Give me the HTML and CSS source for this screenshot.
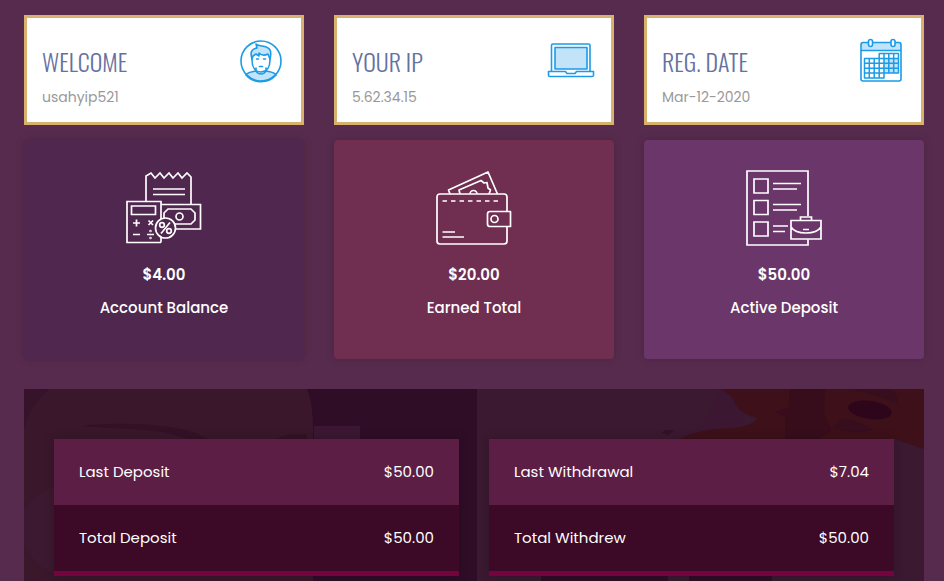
FILE: index.html
```html
<!DOCTYPE html>
<html lang="en">
<head>
<meta charset="utf-8">
<meta name="viewport" content="width=device-width, initial-scale=1">
<title>Account dashboard</title>
<link rel="stylesheet" href="styles.css">
</head>
<body>
<main class="dashboard">
  <section class="cards">
    <article class="info">
      <div>
        <h2 class="info-title">WELCOME</h2>
        <p class="info-text">usahyip521</p>
      </div>
      <svg class="info-icon" viewBox="0 0 48 48" aria-hidden="true">
        <g fill="none" stroke="#1b9be8" stroke-width="1.6" stroke-linejoin="round" stroke-linecap="round">
          <path fill="#c2e3f8" d="M9 38C11 35 15 35 19 34C21 38 27 38 29 34C33 35 37 35 39 38A20 20 0 0 1 9 38Z"/>
          <circle cx="24" cy="24" r="20"/>
          <path d="M15 19V23C15 30 18 35 24 35S33 30 33 23V19M19 31V34M29 31V34"/>
          <path fill="#c2e3f8" d="M15 22C13 16 14 12 20 11L19 7C22 10 28 8 31 11C35 13 34 18 33 22L31 17C27 19 24 18 22 16L22 19L19 17L16 19Z"/>
          <path d="M19.500 22H21.500M26.500 22H28.500M22.500 29.500H25.500"/>
        </g>
      </svg>
    </article>
    <article class="info">
      <div>
        <h2 class="info-title">YOUR IP</h2>
        <p class="info-text">5.62.34.15</p>
      </div>
      <svg class="info-icon" viewBox="0 0 48 48" aria-hidden="true">
        <g fill="none" stroke="#1b9be8" stroke-width="1.6" stroke-linejoin="round">
          <path d="M4.500 34V8.500Q4.500 7 6 7H41.500Q43 7 43 8.500V34"/>
          <path fill="#c2e3f8" d="M8 10.500H40V32H8Z"/>
          <path d="M1.500 34.500H18.500L20 36.500H28L29.500 34.500H46.500V38.500Q46.500 39.500 45 39.500H3Q1.500 39.500 1.500 38.500Z"/>
        </g>
      </svg>
    </article>
    <article class="info">
      <div>
        <h2 class="info-title">REG. DATE</h2>
        <p class="info-text">Mar-12-2020</p>
      </div>
      <svg class="info-icon" viewBox="0 0 48 48" aria-hidden="true">
        <g fill="none" stroke="#1b9be8" stroke-width="1.600" stroke-linejoin="round">
          <path fill="#c2e3f8" d="M4 13.500V8Q4 5.500 6 5.500H42Q44 5.500 44 8V13.500Z"/>
          <path d="M4 13.500V42Q4 44 6 44H42Q44 44 44 42V13.500"/>
          <path fill="#c2e3f8" stroke="none" d="M26 21H41V36H26Z"/>
          <path stroke-width="1.500" d="M7.500 21.500H22.200V16.500H41.500V36H27V41H7.500ZM7.500 26.300H41.500M7.500 31.200H41.500M7.500 36H27M22.200 21.500H41.500M12.300 21.500V41M17.200 21.500V41M22.200 21.500V41M27 16.500V36M31.800 16.500V36M36.700 16.500V36"/>
          <rect x="11.500" y="2.500" width="4" height="7" rx="2" fill="#fff"/>
          <rect x="34" y="2.500" width="4" height="7" rx="2" fill="#fff"/>
        </g>
      </svg>
    </article>

    <article class="stat stat-balance">
      <svg class="stat-icon" viewBox="0 0 76 76" aria-hidden="true">
        <g fill="none" stroke="#fff" stroke-width="1.700">
          <path d="M20 31V6L25 3L29 8L34 3L38 8L43 3L47 8L52 3L56 8L61 3L65 7V34M27 19H59M27 24.500H59"/>
          <path d="M35 34.500H74.500V59H49"/>
          <path d="M38 49V43L42 39H65L69 43V50L65 54H49"/>
          <circle cx="53.500" cy="46.500" r="3.500"/>
          <path d="M35 72.500H1V31.500H35V72.500M5.500 36H29.500V44.500H5.500Z"/>
          <path d="M7 53H14M10.500 49.500V56.500M22.500 50.500L27 55M27 50.500L22.500 55M7 64.500H14M21 64.500H28"/>
          <circle cx="24.500" cy="61" r=".4"/><circle cx="24.500" cy="68" r=".4"/>
          <circle cx="39.500" cy="58" r="10" fill="#50274f"/>
          <path d="M44 52.500L35 63.500"/>
          <circle cx="36" cy="55" r="2.300"/><circle cx="43" cy="61" r="2.300"/>
        </g>
      </svg>
      <p class="stat-value">$4.00</p>
      <p class="stat-label">Account Balance</p>
    </article>
    <article class="stat stat-earned">
      <svg class="stat-icon" viewBox="0 0 76 76" aria-hidden="true">
        <g fill="none" stroke="#fff" stroke-width="1.700" stroke-linejoin="round">
          <path d="M71 41V27Q71 24 68 24H4Q1 24 1 27V71Q1 74 4 74H68Q71 74 71 71V56"/>
          <path d="M14 24L12.500 20L52 2L61.500 24M24 24L23 20L45 10.500L48 13L51 12.500L52 18L54.500 20L53 24"/>
          <path d="M34 24A3.500 3.500 0 0 1 41 24"/>
          <path stroke-dasharray="4.500 4" d="M6.500 31H65"/>
          <path d="M6.500 62H19M6.500 67H28M74.500 41.500H54Q51.500 41.500 51.500 44V54Q51.500 56.500 54 56.500H74.500Z"/>
          <circle cx="58.500" cy="49" r="3.500"/>
        </g>
      </svg>
      <p class="stat-value">$20.00</p>
      <p class="stat-label">Earned Total</p>
    </article>
    <article class="stat stat-active">
      <svg class="stat-icon" viewBox="0 0 76 76" aria-hidden="true">
        <g fill="none" stroke="#fff" stroke-width="1.700">
          <path d="M62 46V1H1V75H62V69.500"/>
          <path d="M8 9H22V23H8ZM8 30.500H22V44.500H8ZM8 52H22V66H8Z"/>
          <path d="M27 13.500H55M27 19H51M27 34.500H55M27 40H51M27 56H42M27 61.500H39"/>
          <path d="M45 50.500H75V69H45ZM54.500 50V47H65.500V50M45 57C50 65 70 65 75 57M57 59.500H63"/>
        </g>
      </svg>
      <p class="stat-value">$50.00</p>
      <p class="stat-label">Active Deposit</p>
    </article>
  </section>

  <section class="summary">
    <svg class="scene" viewBox="0 0 900 192" preserveAspectRatio="none" aria-hidden="true">
      <path fill="#2f0d27" d="M0 0H900V192H0Z"/>
      <path fill="#3a172b" d="M0 0H283C289 15 289 30 289 50V192H0Z"/>
      <path fill="#36132a" d="M0 0H26Q7 14 0 40Z"/>
      <path fill="#341126" d="M58 37C90 33 145 34 171 44L185 50H165C130 38 100 41 58 37ZM252 50L264 45H283V50Z"/>
      <path fill="#3c1930" d="M30 98Q12 104 0 120V155Q12 178 30 185Z"/>
      <path fill="#3b1733" d="M290 37H336V50H290Z"/>
      <path fill="#3b1930" d="M453 0H900V192H453Z"/>
      <path fill="#3c1732" d="M696 0H720V50H660Q690 25 696 0Z"/>
      <path fill="#3d101a" d="M696 0Q707 4 711 14T733 29Q729 37 708 39Q675 40 655 50H871L900 60V0Z"/>
      <path fill="#370d1c" d="M765 0H801L800 24L808 41L795 50H761V28L751 23L765 18Z"/>
      <path fill="#370e1e" d="M818 30Q835 31 850 41Q829 46 808 39ZM825 0H865Q875 5 873 14Q850 5 825 0Z"/>
      <ellipse cx="846" cy="21" rx="22" ry="9" fill="#2e061b" transform="rotate(8 846 21)"/>
      <path fill="#351023" d="M637 44L642 41H650L645 46Z"/>
      <path fill="#2f0d25" d="M517 187H644V192H517ZM665 187H748V192H665Z"/>
    </svg>
    <table class="totals">
      <tbody>
        <tr><th scope="row">Last Deposit</th><td>$50.00</td></tr>
        <tr><th scope="row">Total Deposit</th><td>$50.00</td></tr>
      </tbody>
    </table>
    <table class="totals">
      <tbody>
        <tr><th scope="row">Last Withdrawal</th><td>$7.04</td></tr>
        <tr><th scope="row">Total Withdrew</th><td>$50.00</td></tr>
      </tbody>
    </table>
  </section>
</main>
</body>
</html>
```
FILE: styles.css
```css
* {
  box-sizing: border-box;
}

body {
  margin: 0;
  background: #572b4d;
  color: #fff;
  font-family: Poppins, Inter, sans-serif;
}

h2,
p {
  margin: 0;
}

.dashboard {
  padding: 15px 20px 0 24px;
}

.cards {
  display: grid;
  grid-template-columns: repeat(3, 1fr);
  gap: 15px 30px;
}

.info {
  display: flex;
  justify-content: space-between;
  align-items: flex-start;
  min-height: 110px;
  padding: 19px 16px 8px 15px;
  background: #fff;
  border: 3px solid #d8b26c;
}

.info-title {
  padding-top: 4px;
  color: #6571a0;
  font-family: Oswald, "Liberation Sans Narrow", "Open Sans Condensed", "Roboto Condensed", sans-serif;
  font-size: 24px;
  font-weight: 300;
  line-height: 40px;
}

.info-text {
  color: #999;
  font-size: 14px;
  line-height: 33px;
}

.info-icon {
  width: 48px;
  height: 48px;
}

.stat {
  display: flex;
  flex-direction: column;
  align-items: center;
  padding: 30px 15px 35px;
  border-radius: 4px;
  box-shadow: 0 0 8px rgba(0, 0, 0, 0.15);
  font-weight: 500;
}

.stat-balance {
  background: #50274f;
}

.stat-earned {
  background: #702e51;
}

.stat-active {
  background: #6b366a;
}

.stat-icon {
  width: 76px;
  height: 76px;
  margin-bottom: 12px;
}

.stat-value {
  font-size: 15px;
  font-weight: 600;
  line-height: 33px;
}

.stat-label {
  font-size: 15px;
  line-height: 33px;
}

.summary {
  position: relative;
  display: grid;
  grid-template-columns: 1fr 1fr;
  gap: 30px;
  margin-top: 30px;
  padding: 50px 30px 5px;
}

.scene {
  position: absolute;
  inset: 0;
  width: 100%;
  height: 100%;
}

.totals {
  position: relative;
  width: 100%;
  border-spacing: 0;
  border-bottom: 5px solid #75033e;
  background: #3c0927;
  box-shadow: 0 0 10px rgba(0, 0, 0, 0.2);
  font-size: 15px;
  line-height: 26px;
}

.totals th,
.totals td {
  padding: 20px 25px;
  font-weight: 400;
  text-align: left;
}

.totals td {
  text-align: right;
}

.totals tr:first-child {
  background: #5c1e45;
}
```
